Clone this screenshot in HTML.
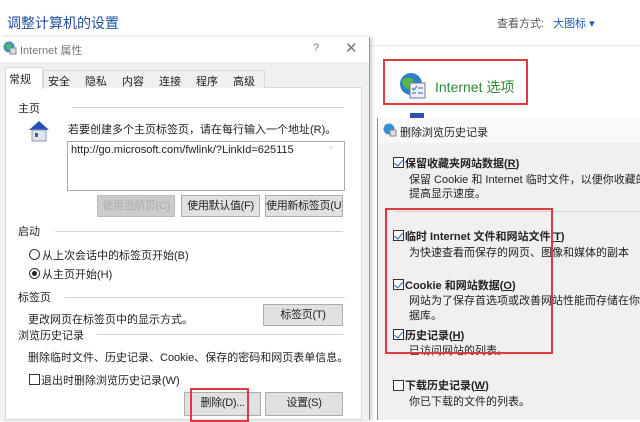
<!DOCTYPE html>
<html><head><meta charset="utf-8"><style>
*{margin:0;padding:0;box-sizing:border-box}
body{width:640px;height:420px;overflow:hidden;background:#fff;position:relative;font-family:"Liberation Sans","Noto Sans CJK SC",sans-serif;font-size:11px;color:#222}
.a{position:absolute;white-space:nowrap}
.btn{position:absolute;background:#e1e1e1;border:1px solid #adadad;text-align:center;font-size:11px;line-height:20px;white-space:nowrap;overflow:hidden;letter-spacing:-0.3px}
.ln{position:absolute;height:1px;background:#d5d5d5}
.cb{position:absolute;width:11px;height:11px;border:1px solid #333;background:#fff}
.ck::after{content:"";position:absolute;left:2px;top:0px;width:4px;height:7px;border:solid #2a5fb0;border-width:0 1.5px 1.5px 0;transform:rotate(40deg)}
.red{position:absolute;border:2px solid #e23a3a}
b{font-weight:bold}
</style></head><body>
<div class="a" style="left:7px;top:13px;font-size:14px;color:#1e4f9c">调整计算机的设置</div>
<div class="a" style="left:497px;top:15px;font-size:11px;color:#555">查看方式: <span style="color:#1e5bb8;margin-left:6px">大图标 ▾</span></div>
<div class="ln" style="left:370px;top:45px;width:270px;background:#e6ecf3"></div>

<div class="a" style="left:0;top:37px;width:370px;height:383px;background:#f0f0f0;border-right:1px solid #999;box-shadow:2px 0 4px rgba(0,0,0,.2)"></div>
<div class="a" style="left:0;top:37px;width:369px;height:25px;background:#fff"></div>
<svg class="a" style="left:3px;top:41px" width="14" height="14"><circle cx="6" cy="6" r="5.5" fill="#3a8fd0"/><path d="M2 4q4-3 7 1q-3 2-2 6" fill="#5cb85c"/><rect x="7" y="7" width="6" height="6" fill="#ddd" stroke="#888"/></svg>
<div class="a" style="left:20px;top:42px;color:#777;font-size:11px">Internet 属性</div>
<div class="a" style="left:313px;top:42px;color:#777">?</div>
<div class="a" style="left:345px;top:39px;color:#777;font-size:15px">✕</div>
<div class="a" style="left:5px;top:87px;width:357px;height:333px;background:#fff;border:1px solid #d9d9d9"></div>
<div class="a" style="left:5px;top:67px;width:38px;height:22px;background:#fff;border:1px solid #d9d9d9;border-bottom:none"></div>
<div class="a" style="left:9px;top:71px">常规</div>
<div class="a" style="left:43px;top:70px;width:222px;height:18px;border:1px solid #d9d9d9;border-bottom:none;background:#f0f0f0"></div>
<div class="a" style="left:48px;top:73px">安全</div><div class="a" style="left:85px;top:73px">隐私</div><div class="a" style="left:122px;top:73px">内容</div><div class="a" style="left:159px;top:73px">连接</div><div class="a" style="left:196px;top:73px">程序</div><div class="a" style="left:233px;top:73px">高级</div>
<div class="a" style="left:18px;top:100px">主页</div><div class="ln" style="left:72px;top:107px;width:272px"></div>
<svg class="a" style="left:26px;top:118px" width="26" height="26"><path d="M3 12L13 3L23 12Z" fill="#2a4fb5"/><rect x="6" y="12" width="14" height="11" fill="#dfe6ee" stroke="#8a9aad"/><rect x="9" y="15" width="3" height="4" fill="#556"/></svg>
<div class="a" style="left:68px;top:121px">若要创建多个主页标签页，请在每行输入一个地址(R)。</div>
<div class="a" style="left:67px;top:141px;width:278px;height:50px;border:1px solid #aaa;background:#fff"></div>
<div class="a" style="left:71px;top:144px">http://go.microsoft.com/fwlink/?LinkId=625115</div>
<div class="a" style="left:329px;top:145px;color:#bbb;font-size:8px">^</div>
<div class="btn" style="left:97px;top:195px;width:78px;color:#aaa;background:#ccc;border-color:#bbb">使用当前页(C)</div>
<div class="btn" style="left:181px;top:195px;width:79px">使用默认值(F)</div>
<div class="btn" style="left:265px;top:195px;width:78px">使用新标签页(U)</div>
<div class="a" style="left:18px;top:223px">启动</div><div class="ln" style="left:55px;top:231px;width:288px"></div>
<div class="a" style="left:29px;top:249px;width:11px;height:11px;border:1px solid #333;border-radius:50%"></div>
<div class="a" style="left:42px;top:247px">从上次会话中的标签页开始(B)</div>
<div class="a" style="left:29px;top:268px;width:11px;height:11px;border:1px solid #333;border-radius:50%"><div style="margin:2px;width:5px;height:5px;border-radius:50%;background:#222"></div></div>
<div class="a" style="left:42px;top:266px">从主页开始(H)</div>
<div class="a" style="left:18px;top:289px">标签页</div><div class="ln" style="left:65px;top:297px;width:280px"></div>
<div class="a" style="left:28px;top:311px">更改网页在标签页中的显示方式。</div>
<div class="btn" style="left:263px;top:304px;width:80px;height:22px">标签页(T)</div>
<div class="a" style="left:18px;top:327px">浏览历史记录</div><div class="ln" style="left:97px;top:334px;width:246px"></div>
<div class="a" style="left:28px;top:349px">删除临时文件、历史记录、Cookie、保存的密码和网页表单信息。</div>
<div class="cb" style="left:29px;top:374px"></div>
<div class="a" style="left:41px;top:372px">退出时删除浏览历史记录(W)</div>
<div class="btn" style="left:184px;top:392px;width:77px;height:24px">删除(D)...</div>
<div class="btn" style="left:265px;top:392px;width:78px;height:24px">设置(S)</div>
<div class="red" style="left:190px;top:388px;width:59px;height:34px"></div>

<div class="red" style="left:383px;top:59px;width:145px;height:46px"></div>
<svg class="a" style="left:399px;top:72px" width="28" height="28"><circle cx="12" cy="12" r="11" fill="#2f7fc8"/><path d="M3 8q6-5 12 0q-4 4-2 10q-6 0-9-5z" fill="#58b54a"/><rect x="11" y="11" width="15" height="15" fill="#eef" stroke="#778"/><path d="M13 16l2 2l3-4M19 16h5M19 21h5M13 21h4" stroke="#36a" fill="none"/></svg>
<div class="a" style="left:435px;top:77px;font-size:14px;color:#2f8a3a">Internet 选项</div>
<div class="a" style="left:410px;top:113px;width:14px;height:5px;background:#2a4fb5"></div>
<div class="a" style="left:377px;top:118px;width:263px;height:302px;background:#f0f0f0;border-left:1px solid #888;overflow:hidden">
<div class="a" style="left:0;top:0;width:263px;height:25px;background:#f8f8f8"></div>
<svg class="a" style="left:5px;top:5px" width="14" height="14"><circle cx="6" cy="6" r="5.5" fill="#3a8fd0"/><rect x="7" y="7" width="6" height="6" fill="#ddd" stroke="#888"/></svg>
<div class="a" style="left:22px;top:6px">删除浏览历史记录</div>
<div class="cb ck" style="left:15px;top:39px"></div>
<div class="a" style="left:27px;top:37px"><b>保留收藏夹网站数据(<u>R</u>)</b></div>
<div class="a" style="left:31px;top:53px">保留 Cookie 和 Internet 临时文件，以便你收藏的网站能</div>
<div class="a" style="left:31px;top:67px">提高显示速度。</div>
<div class="ln" style="left:17px;top:93px;width:245px"></div>
<div class="cb ck" style="left:15px;top:112px"></div>
<div class="a" style="left:27px;top:110px"><b>临时 Internet 文件和网站文件(<u>T</u>)</b></div>
<div class="a" style="left:31px;top:126px">为快速查看而保存的网页、图像和媒体的副本</div>
<div class="cb ck" style="left:15px;top:161px"></div>
<div class="a" style="left:27px;top:159px"><b>Cookie 和网站数据(<u>O</u>)</b></div>
<div class="a" style="left:31px;top:174px">网站为了保存首选项或改善网站性能而存储在你计算机上的</div>
<div class="a" style="left:31px;top:189px">据库。</div>
<div class="cb ck" style="left:15px;top:211px"></div>
<div class="a" style="left:27px;top:209px"><b>历史记录(<u>H</u>)</b></div>
<div class="a" style="left:31px;top:224px">已访问网站的列表。</div>
<div class="cb" style="left:15px;top:262px"></div>
<div class="a" style="left:27px;top:259px"><b>下载历史记录(<u>W</u>)</b></div>
<div class="a" style="left:31px;top:275px">你已下载的文件的列表。</div>
</div>
<div class="red" style="left:385px;top:208px;width:168px;height:146px"></div>
</body></html>
